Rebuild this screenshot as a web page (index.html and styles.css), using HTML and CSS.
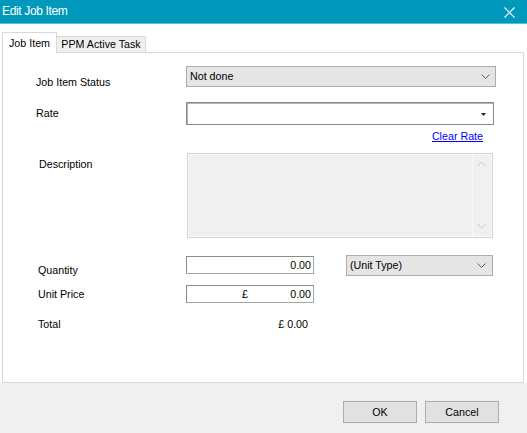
FILE: index.html
```html
<!DOCTYPE html>
<html>
<head>
<meta charset="utf-8">
<link rel="stylesheet" href="styles.css">
</head>
<body>
<div class="window">
  <div class="titlebar">
    <span class="title">Edit Job Item</span>
    <svg class="close" width="11" height="11" viewBox="0 0 11 11"><path d="M0.5 0.5 L10.5 10.5 M10.5 0.5 L0.5 10.5" stroke="#fff" stroke-width="1.1" fill="none"/></svg>
  </div>
  <div class="client">
    <div class="tabs">
      <div class="tab tab-active">Job Item</div>
      <div class="tab tab-inactive">PPM Active Task</div>
    </div>
    <div class="tabpage">
      <div class="row row-status">
        <div class="lbl lbl-status">Job Item Status</div>
        <div class="combo combo-status">
          <span>Not done</span>
          <svg class="chev" width="9" height="6" viewBox="0 0 9 6"><path d="M0.5 0.5 L4.5 4.5 L8.5 0.5" stroke="#606060" stroke-width="1" fill="none"/></svg>
        </div>
      </div>
      <div class="row row-rate">
        <div class="lbl lbl-rate">Rate</div>
        <div class="ratebox">
          <svg class="tri" width="5" height="3" viewBox="0 0 5 3"><path d="M0 0 H5 L2.5 3 Z" fill="#222"/></svg>
        </div>
      </div>
      <div class="row row-link">
        <a class="link" href="#">Clear Rate</a>
      </div>
      <div class="row row-desc">
        <div class="lbl lbl-desc">Description</div>
        <div class="memo">
          <div class="memo-text"></div>
          <div class="vscroll">
            <svg width="9" height="6" viewBox="0 0 9 6"><path d="M0.5 5 L4.5 1 L8.5 5" stroke="#c4c4c4" stroke-width="1" fill="none"/></svg>
            <svg width="9" height="6" viewBox="0 0 9 6"><path d="M0.5 1 L4.5 5 L8.5 1" stroke="#c4c4c4" stroke-width="1" fill="none"/></svg>
          </div>
        </div>
      </div>
      <div class="row row-qty">
        <div class="lbl lbl-qty">Quantity</div>
        <div class="tbox tbox-qty"><span>0.00</span></div>
        <div class="combo combo-unit">
          <span>(Unit Type)</span>
          <svg class="chev" width="9" height="6" viewBox="0 0 9 6"><path d="M0.5 0.5 L4.5 4.5 L8.5 0.5" stroke="#606060" stroke-width="1" fill="none"/></svg>
        </div>
      </div>
      <div class="row row-price">
        <div class="lbl lbl-price">Unit Price</div>
        <div class="tbox tbox-price"><span>£</span><span>0.00</span></div>
      </div>
      <div class="row row-total">
        <div class="lbl lbl-total">Total</div>
        <div class="total">£ 0.00</div>
      </div>
    </div>
  </div>
  <div class="footer">
    <div class="btn">OK</div>
    <div class="btn">Cancel</div>
  </div>
</div>
</body>
</html>
```

FILE: styles.css
```css
html, body {
  margin: 0;
  padding: 0;
}
body {
  font-family: "Liberation Sans", Arial, sans-serif;
  font-size: 10.7px;
  color: #000;
  background: #f0f0f0;
}
.window {
  width: 527px;
  height: 433px;
  display: flex;
  flex-direction: column;
  background: #f0f0f0;
  overflow: hidden;
}
.titlebar {
  height: 23px;
  border-bottom: 1px solid #5bbfd8;
  background: #0099bc;
  display: flex;
  align-items: center;
  justify-content: space-between;
  padding-left: 2px;
  padding-right: 12px;
}
.title {
  color: #fff;
  font-size: 12px;
  letter-spacing: -0.35px;
  line-height: 23px;
}
.close {
  margin-top: 1px;
  display: block;
}
.client {
  height: 359px;
  box-sizing: border-box;
  background: #fff;
  padding: 8px 3px 0 2px;
  display: flex;
  flex-direction: column;
}
.tabs {
  height: 20px;
  display: flex;
  align-items: flex-end;
}
.tab {
  box-sizing: border-box;
  border: 1px solid #d9d9d9;
  border-bottom: none;
  text-align: center;
  line-height: 13px;
  white-space: nowrap;
}
.tab-active {
  width: 55px;
  height: 21px;
  margin-bottom: -1px;
  padding-top: 4px;
  background: #fff;
  position: relative;
  z-index: 1;
}
.tab-inactive {
  width: 90px;
  height: 16px;
  margin-left: -1px;
  padding-top: 1px;
  background: #f0f0f0;
}
.tabpage {
  height: 331px;
  box-sizing: border-box;
  border: 1px solid #d9d9d9;
  padding-top: 13px;
}
.row {
  display: flex;
  align-items: flex-start;
}
.lbl {
  width: 183px;
  box-sizing: border-box;
  line-height: 13px;
  white-space: nowrap;
  flex: none;
}
.lbl-status { padding-left: 33px; margin-top: 10px; margin-bottom: -2px; }
.lbl-rate { padding-left: 33px; margin-top: 5px; }
.lbl-desc { padding-left: 36px; margin-top: 5px; }
.lbl-qty { padding-left: 35px; margin-top: 9px; margin-bottom: -1px; }
.lbl-price { padding-left: 35px; margin-top: 3px; margin-bottom: -3px; }
.lbl-total { padding-left: 35px; }

.combo {
  box-sizing: border-box;
  height: 21px;
  background: #e5e5e5;
  border: 1px solid #adadad;
  display: flex;
  align-items: center;
  justify-content: space-between;
  padding-left: 3px;
  padding-right: 5px;
  line-height: 13px;
}
.combo-status { width: 310px; }
.chev { display: block; }

.row-rate { margin-top: 15px; }
.ratebox {
  box-sizing: border-box;
  width: 308px;
  height: 23px;
  background: #fff;
  border: 1px solid #8a8a8a;
  box-shadow: inset 1px 1px 0 #b4b4b4;
  display: flex;
  align-items: center;
  justify-content: flex-end;
  padding-right: 7px;
}
.tri { display: block; margin-top: 1px; }

.row-link {
  margin-top: 5px;
  padding-left: 183px;
  width: 297px;
  justify-content: flex-end;
}
.link {
  color: #0000ff;
  text-decoration: underline;
  line-height: 13px;
}

.row-desc { margin-top: 10px; }
.memo {
  margin-left: 1px;
  box-sizing: border-box;
  width: 306px;
  height: 85px;
  background: #f0f0f0;
  border: 1px solid #d4d4d4;
  box-shadow: inset 0 0 0 1px #f8f8f8;
  display: flex;
}
.memo-text { flex: 1; }
.vscroll {
  width: 17px;
  margin: 1px 2px 1px 0;
  border-left: 1px solid #f8f8f8;
  display: flex;
  flex-direction: column;
  justify-content: space-between;
  align-items: center;
  padding: 6px 0 7px;
}
.vscroll svg { display: block; }

.row-qty { margin-top: 17px; }
.tbox {
  box-sizing: border-box;
  width: 128px;
  height: 18px;
  background: #fff;
  border: 1px solid #a5a5a5;
  border-top-color: #8c8c8c;
  border-left-color: #8c8c8c;
  display: flex;
  align-items: center;
  justify-content: flex-end;
  padding-right: 2px;
  line-height: 13px;
}
.tbox-qty { margin-top: 1px; }
.combo-unit {
  width: 147px;
  margin-left: 32px;
  padding-right: 6px;
}
.row-price { margin-top: 9px; }
.tbox-price {
  justify-content: space-between;
  padding-left: 55px;
}
.row-total { margin-top: 15px; }
.total {
  width: 122px;
  text-align: right;
  line-height: 13px;
}

.footer {
  flex: 1;
  display: flex;
  justify-content: flex-end;
  align-items: flex-start;
  gap: 8px;
  padding-top: 18px;
  padding-right: 28px;
}
.btn {
  box-sizing: border-box;
  width: 74px;
  height: 22px;
  background: #e1e1e1;
  border: 1px solid #adadad;
  text-align: center;
  line-height: 20px;
}
```
